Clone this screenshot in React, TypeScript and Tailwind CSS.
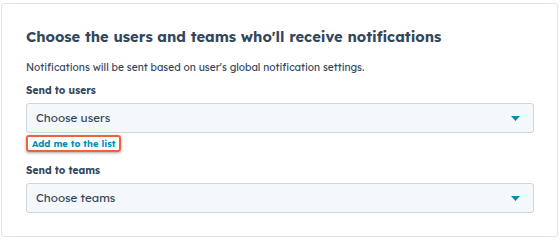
import React from "react";

function Caret() {
  return (
    <svg width="9" height="5" viewBox="0 0 9 5" className="shrink-0">
      <path d="M0 0 L9 0 L4.5 5 Z" fill="#0091ae" />
    </svg>
  );
}

function Select({ placeholder }: { placeholder: string }) {
  return (
    <div className="flex h-[30px] items-center justify-between rounded-[3px] border border-[#cbd6e2] bg-[#f5f8fa] pl-[9px] pr-[13px]">
      <span className="text-[11.6px] text-[#33475b]">{placeholder}</span>
      <Caret />
    </div>
  );
}

export default function App() {
  return (
    <div
      className="h-[242px] w-[560px] bg-white pl-[1px] pt-[3px]"
      style={{ fontFamily: "'Lexend Deca', 'Noto Sans', sans-serif" }}
    >
      <div className="h-[234px] w-[557px] rounded-[3px] border border-[#dfe3eb] bg-white pl-[24px] pr-[23px] pt-[23px]">
        <h2 className="text-[14.7px] font-bold leading-[20px] text-[#33475b]">
          Choose the users and teams who'll receive notifications
        </h2>
        <p className="mt-[14px] text-[10.2px] leading-[14px] text-[#33475b]">
          Notifications will be sent based on user's global notification settings.
        </p>
        <div className="mt-[9px] text-[10.2px] font-bold leading-[14px] text-[#33475b]">Send to users</div>
        <div className="mt-[5px]">
          <Select placeholder="Choose users" />
        </div>
        <div className="mt-[2px] flex">
          <span className="rounded-[3px] border-[2.5px] border-[#f2613f] px-[4px] text-[9.3px] font-bold leading-[13px] text-[#0091ae] shadow-[0_1px_3px_rgba(0,0,0,0.35)]">
            Add me to the list
          </span>
        </div>
        <div className="mt-[12px] text-[10.2px] font-bold leading-[14px] text-[#33475b]">Send to teams</div>
        <div className="mt-[5px]">
          <Select placeholder="Choose teams" />
        </div>
      </div>
    </div>
  );
}
